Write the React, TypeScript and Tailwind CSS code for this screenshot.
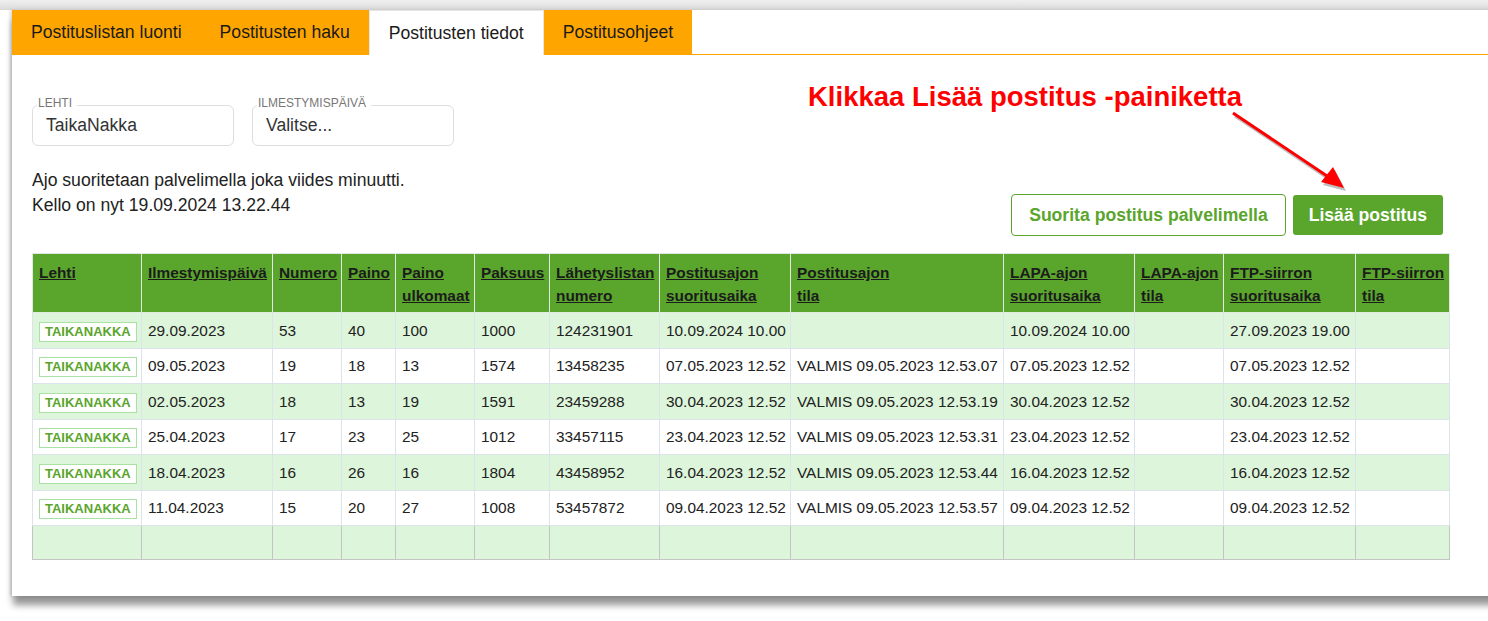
import React from "react";

type Row = {
  date: string;
  numero: string;
  paino: string;
  ulkomaat: string;
  paksuus: string;
  lista: string;
  postAika: string;
  postTila: string;
  lapaAika: string;
  ftpAika: string;
};

const rows: Row[] = [
  { date: "29.09.2023", numero: "53", paino: "40", ulkomaat: "100", paksuus: "1000", lista: "124231901", postAika: "10.09.2024 10.00", postTila: "", lapaAika: "10.09.2024 10.00", ftpAika: "27.09.2023 19.00" },
  { date: "09.05.2023", numero: "19", paino: "18", ulkomaat: "13", paksuus: "1574", lista: "13458235", postAika: "07.05.2023 12.52", postTila: "VALMIS 09.05.2023 12.53.07", lapaAika: "07.05.2023 12.52", ftpAika: "07.05.2023 12.52" },
  { date: "02.05.2023", numero: "18", paino: "13", ulkomaat: "19", paksuus: "1591", lista: "23459288", postAika: "30.04.2023 12.52", postTila: "VALMIS 09.05.2023 12.53.19", lapaAika: "30.04.2023 12.52", ftpAika: "30.04.2023 12.52" },
  { date: "25.04.2023", numero: "17", paino: "23", ulkomaat: "25", paksuus: "1012", lista: "33457115", postAika: "23.04.2023 12.52", postTila: "VALMIS 09.05.2023 12.53.31", lapaAika: "23.04.2023 12.52", ftpAika: "23.04.2023 12.52" },
  { date: "18.04.2023", numero: "16", paino: "26", ulkomaat: "16", paksuus: "1804", lista: "43458952", postAika: "16.04.2023 12.52", postTila: "VALMIS 09.05.2023 12.53.44", lapaAika: "16.04.2023 12.52", ftpAika: "16.04.2023 12.52" },
  { date: "11.04.2023", numero: "15", paino: "20", ulkomaat: "27", paksuus: "1008", lista: "53457872", postAika: "09.04.2023 12.52", postTila: "VALMIS 09.05.2023 12.53.57", lapaAika: "09.04.2023 12.52", ftpAika: "09.04.2023 12.52" },
];

const columns: { label: string[]; width: number }[] = [
  { label: ["Lehti"], width: 109 },
  { label: ["Ilmestymispäivä"], width: 131 },
  { label: ["Numero"], width: 69 },
  { label: ["Paino"], width: 54 },
  { label: ["Paino", "ulkomaat"], width: 79 },
  { label: ["Paksuus"], width: 75 },
  { label: ["Lähetyslistan", "numero"], width: 110 },
  { label: ["Postitusajon", "suoritusaika"], width: 131 },
  { label: ["Postitusajon", "tila"], width: 213 },
  { label: ["LAPA-ajon", "suoritusaika"], width: 131 },
  { label: ["LAPA-ajon", "tila"], width: 89 },
  { label: ["FTP-siirron", "suoritusaika"], width: 132 },
  { label: ["FTP-siirron", "tila"], width: 94 },
];

const tabs = [
  { name: "Postituslistan luonti", active: false },
  { name: "Postitusten haku", active: false },
  { name: "Postitusten tiedot", active: true },
  { name: "Postitusohjeet", active: false },
];

const Field = ({ label, value }: { label: string; value: string }) => (
  <div className="relative w-[202px] h-[41px] border border-[#dedede] rounded-[6px] pl-[13px] flex items-center text-[17.6px] text-[#333]">
    <span className="absolute -top-[10px] left-[4px] bg-white pl-[1px] pr-[5px] text-[12px] leading-[15px] text-[#777]">
      {label}
    </span>
    {value}
  </div>
);

const cell = "border border-[#dde3ea] px-[6px] h-[35.5px] text-[15.4px] text-[#222] whitespace-nowrap";

export default function App() {
  return (
    <div
      className="relative w-[1488px] h-[621px] overflow-hidden bg-white"
      style={{ fontFamily: '"Liberation Sans", Arial, sans-serif' }}
    >
      <div className="h-[10px] bg-gradient-to-b from-[#f0f0f0] to-[#dadada]" />
      <div className="ml-[12px] w-[1500px] h-[586px] bg-white shadow-[-2px_0_3px_rgba(0,0,0,0.15),0_10px_7px_-1px_rgba(0,0,0,0.42)]">
        <div className="flex h-[45px]">
          {tabs.map((t) => (
            <div
              key={t.name}
              className={`flex items-center px-[19px] text-[17.6px] text-[#1a1a1a] ${
                t.active ? "bg-white border-t border-l border-r border-[#e6e6e6]" : "bg-[#ffa500]"
              }`}
            >
              {t.name}
            </div>
          ))}
          <div className="flex-1 border-b border-[#ffa500]" />
        </div>

        <div className="px-[20px]">
          <div className="mt-[50px] flex gap-[18px]">
            <Field label="LEHTI" value="TaikaNakka" />
            <Field label="ILMESTYMISPÄIVÄ" value="Valitse..." />
          </div>

          <div className="mt-[22px] w-[1417px] flex justify-between items-start">
            <div className="text-[17.6px] leading-[25px] text-[#222]">
              <div>Ajo suoritetaan palvelimella joka viides minuutti.</div>
              <div>Kello on nyt 19.09.2024 13.22.44</div>
            </div>
            <div className="mt-[26px] mr-[6px] flex items-start gap-[7px]">
              <button className="h-[42px] px-[17px] border border-[#5aa52c] rounded-[4px] bg-white text-[17.6px] font-bold text-[#5aa52c]">
                Suorita postitus palvelimella
              </button>
              <button className="mt-[1px] h-[40px] px-[16px] rounded-[3px] bg-[#5aa52c] text-[17.6px] font-bold text-white">
                Lisää postitus
              </button>
            </div>
          </div>

          <table className="mt-[17px] w-[1417px] table-fixed border-collapse">
            <colgroup>
              {columns.map((c, i) => (
                <col key={i} style={{ width: c.width }} />
              ))}
            </colgroup>
            <thead>
              <tr className="bg-[#5aa52c]">
                {columns.map((c, i) => (
                  <th
                    key={i}
                    className="h-[59px] align-top text-left border border-[#e2e8e2] pt-[7px] px-[6px] text-[15.4px] leading-[23px] font-bold text-[#1c1c1c] underline whitespace-nowrap"
                  >
                    {c.label.map((l, j) => (
                      <div key={j}>{l}</div>
                    ))}
                  </th>
                ))}
              </tr>
            </thead>
            <tbody>
              {rows.map((r, i) => (
                <tr key={i} className={i % 2 === 0 ? "bg-[#ddf5da]" : "bg-white"}>
                  <td className={cell}>
                    <span className="inline-block border border-[#a9e3a3] bg-white px-[5px] text-[13px] leading-[18px] font-bold text-[#5aa52c]">
                      TAIKANAKKA
                    </span>
                  </td>
                  <td className={cell}>{r.date}</td>
                  <td className={cell}>{r.numero}</td>
                  <td className={cell}>{r.paino}</td>
                  <td className={cell}>{r.ulkomaat}</td>
                  <td className={cell}>{r.paksuus}</td>
                  <td className={cell}>{r.lista}</td>
                  <td className={cell}>{r.postAika}</td>
                  <td className={cell}>{r.postTila}</td>
                  <td className={cell}>{r.lapaAika}</td>
                  <td className={cell}></td>
                  <td className={cell}>{r.ftpAika}</td>
                  <td className={cell}></td>
                </tr>
              ))}
              <tr className="bg-[#ddf5da]">
                {columns.map((_, i) => (
                  <td key={i} className="h-[34px] border border-[#c4c4c4]" />
                ))}
              </tr>
            </tbody>
          </table>
        </div>
      </div>

      <div className="absolute left-[808px] top-[81px] text-[27.5px] leading-[31px] font-bold text-[#ff0000] whitespace-nowrap">
        Klikkaa Lisää postitus -painiketta
      </div>
      <svg className="absolute left-0 top-0 pointer-events-none" width="1488" height="621">
        <g transform="translate(2,3)" opacity="0.25">
          <line x1="1233" y1="113" x2="1330" y2="178" stroke="#000" strokeWidth="3" />
          <polygon points="1344,188 1321,182 1333,167" fill="#000" />
        </g>
        <line x1="1233" y1="113" x2="1330" y2="178" stroke="#ff0000" strokeWidth="3" />
        <polygon points="1344,188 1321,182 1333,167" fill="#ff0000" />
      </svg>
    </div>
  );
}
